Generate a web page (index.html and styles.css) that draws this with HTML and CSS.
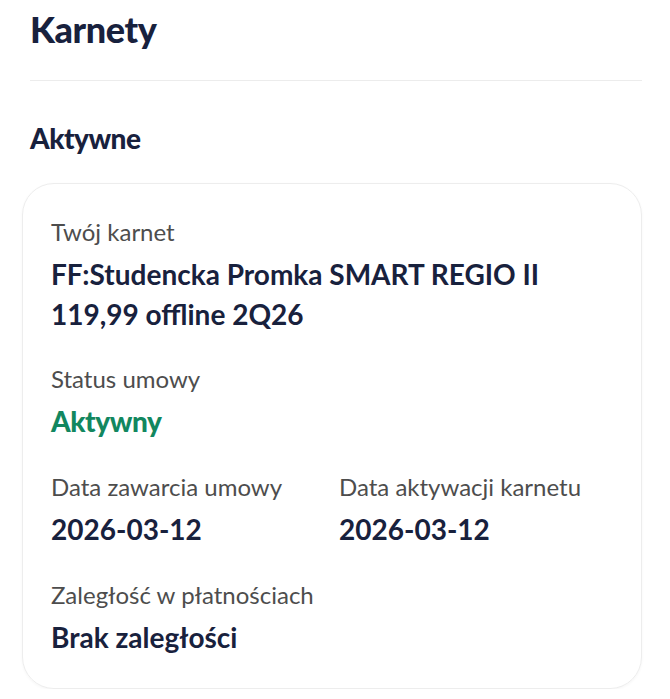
FILE: index.html
```html
<!DOCTYPE html>
<html lang="pl">
<head>
<meta charset="utf-8">
<title>Karnety</title>
<link rel="stylesheet" href="styles.css">
</head>
<body>
<main class="page">
  <h1 class="title">Karnety</h1>
  <hr class="divider">
  <h2 class="section">Aktywne</h2>
  <section class="card">
    <div class="field">
      <div class="label">Twój karnet</div>
      <div class="value multi">FF:Studencka Promka SMART REGIO II<br>119,99 offline 2Q26</div>
    </div>
    <div class="field">
      <div class="label">Status umowy</div>
      <div class="value status">Aktywny</div>
    </div>
    <div class="row">
      <div class="field">
        <div class="label">Data zawarcia umowy</div>
        <div class="value">2026-03-12</div>
      </div>
      <div class="field">
        <div class="label">Data aktywacji karnetu</div>
        <div class="value">2026-03-12</div>
      </div>
    </div>
    <div class="field">
      <div class="label">Zaległość w płatnościach</div>
      <div class="value">Brak zaległości</div>
    </div>
  </section>
</main>
</body>
</html>
```

FILE: styles.css
```css
* { box-sizing: border-box; }
html, body { margin: 0; padding: 0; background: #ffffff; }
body { font-family: Lato, "Noto Sans", sans-serif; color: #18213d; }
.page { padding: 0 28px 0 22px; }
.title {
  margin: 0;
  padding: 7px 0 0 8px;
  font-size: 36px;
  line-height: 44px;
  font-weight: 900;
  letter-spacing: -0.4px;
  color: #18213d;
}
.divider {
  margin: 29px 0 0 8px;
  border: 0;
  height: 1px;
  background: #ececec;
}
.section {
  margin: 0;
  padding: 40px 0 0 8px;
  font-size: 28px;
  line-height: 34px;
  font-weight: 900;
  letter-spacing: -0.5px;
  color: #18213d;
}
.card {
  margin-top: 28px;
  border: 1.5px solid #ededed;
  border-radius: 32px;
  padding: 33px 28px 32px 28px;
  display: flex;
  flex-direction: column;
  gap: 32px;
  box-shadow: 0 1px 3px rgba(0,0,0,0.04);
}
.row { display: grid; grid-template-columns: 288px 1fr; }
.field { display: flex; flex-direction: column; gap: 8px; }
.label { font-size: 24px; line-height: 30px; color: #4d4d4d; font-weight: 400; }
.value { font-size: 28px; line-height: 38px; font-weight: 700; color: #18213d; }
.multi { line-height: 40px; margin-top: -1px; margin-bottom: -2px; }
.status { color: #12875f; font-weight: 900; letter-spacing: -0.4px; }
```
